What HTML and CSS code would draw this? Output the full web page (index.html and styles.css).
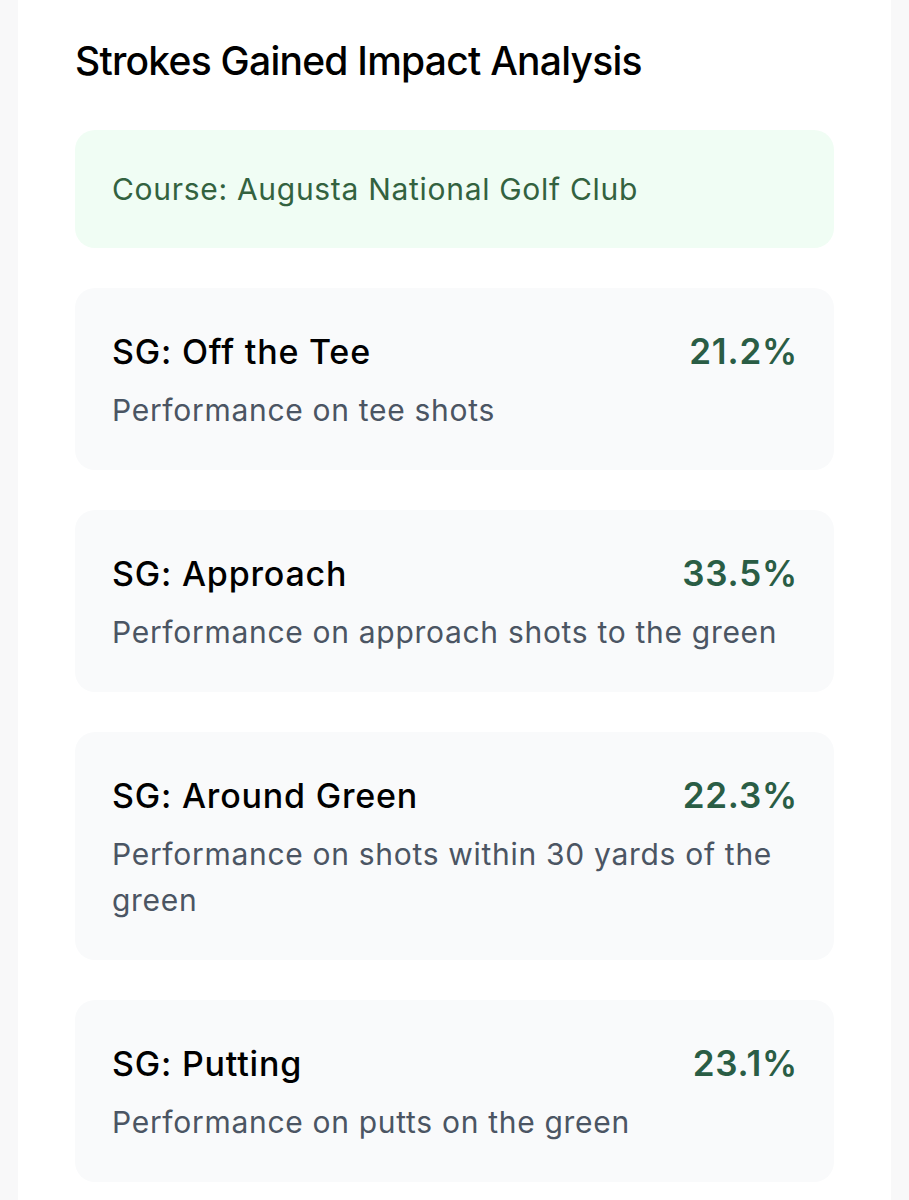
FILE: index.html
```html
<!DOCTYPE html>
<html lang="en">

    <head>

        <meta charset="UTF-8">
        <meta name="viewport" content="width=device-width, initial-scale=1.0">
        <title>Strokes Gained Impact Analysis</title>

        <link rel="stylesheet" href="styles.css">

    </head>

    <body>

        <main class="panel">

            <h2 class="panel-title">Strokes Gained Impact Analysis</h2>

            <div class="course-box">Course: Augusta National Golf Club</div>

            <section class="sg-list">

                <article class="sg-card">
                    <div class="sg-row">
                        <h3 class="sg-name">SG: Off the Tee</h3>
                        <span class="sg-value">21.2%</span>
                    </div>
                    <p class="sg-desc">Performance on tee shots</p>
                </article>

                <article class="sg-card">
                    <div class="sg-row">
                        <h3 class="sg-name">SG: Approach</h3>
                        <span class="sg-value">33.5%</span>
                    </div>
                    <p class="sg-desc">Performance on approach shots to the green</p>
                </article>

                <article class="sg-card">
                    <div class="sg-row">
                        <h3 class="sg-name">SG: Around Green</h3>
                        <span class="sg-value">22.3%</span>
                    </div>
                    <p class="sg-desc">Performance on shots within 30 yards of the green</p>
                </article>

                <article class="sg-card">
                    <div class="sg-row">
                        <h3 class="sg-name">SG: Putting</h3>
                        <span class="sg-value">23.1%</span>
                    </div>
                    <p class="sg-desc">Performance on putts on the green</p>
                </article>

            </section>

        </main>

    </body>

</html>
```

FILE: styles.css
```css
* 
    {
        margin: 0;
        padding: 0;
        box-sizing: border-box;
    }

body 
    {
        font-family: 'Inter', 'Roboto', sans-serif;
        background-color: #f8f8f9;
        padding: 0 18px;
        min-height: 100vh;
    }

.panel 
    {
        background-color: #fff;
        min-height: 100vh;
        padding: 34px 57px 40px;
    }

.panel-title 
    {
        font-size: 39px;
        font-weight: 500;
        line-height: 54px;
        color: #000;
        letter-spacing: -0.75px;
        margin-bottom: 42px;
    }

.course-box 
    {
        background-color: #f0fdf4;
        border-radius: 20px;
        padding: 37px;
        font-size: 30px;
        line-height: 44px;
        letter-spacing: 0.7px;
        color: #33623f;
        margin-bottom: 40px;
    }

.sg-list 
    {
        display: flex;
        flex-direction: column;
        gap: 40px;
    }

.sg-card 
    {
        background-color: #f9fafb;
        border-radius: 20px;
        padding: 37px;
    }

.sg-row 
    {
        display: flex;
        justify-content: space-between;
        align-items: center;
    }

.sg-name 
    {
        font-size: 34px;
        font-weight: 500;
        line-height: 53px;
        letter-spacing: 0.8px;
        color: #000;
    }

.sg-value 
    {
        font-size: 35px;
        font-weight: 600;
        line-height: 53px;
        letter-spacing: 0.8px;
        margin-right: -1px;
        color: #2a5d45;
    }

.sg-desc 
    {
        font-size: 30px;
        line-height: 46px;
        letter-spacing: 0.7px;
        color: #4b5563;
        margin-top: 9px;
    }
```
